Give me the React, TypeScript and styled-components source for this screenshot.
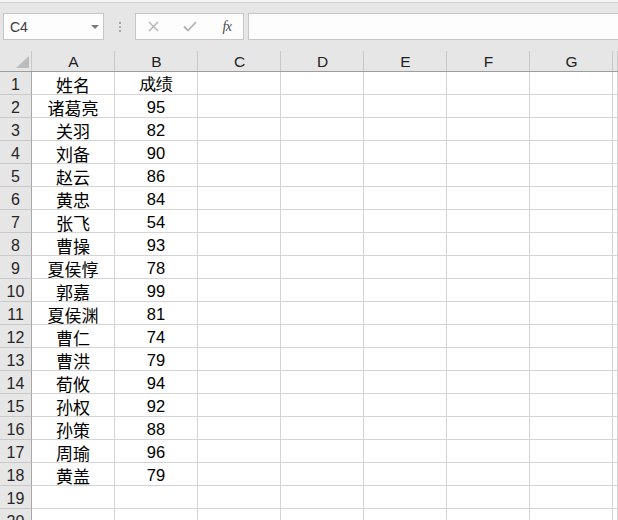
import React from "react";
import styled, { createGlobalStyle } from "styled-components";

const Global = createGlobalStyle`
  html, body { margin: 0; padding: 0; background: #ffffff; overflow: hidden; }
  body { width: 618px; height: 520px; }
`;

const Page = styled.div`
  width: 618px;
  height: 520px;
  overflow: hidden;
  background: #ffffff;
  font-family: "Liberation Sans", Arial, sans-serif;
`;

const FormulaArea = styled.div`
  height: 49px;
  box-sizing: border-box;
  background: #e6e6e6;
  border-top: 2px solid #f3f3f3;
  position: relative;
  display: flex;
  align-items: flex-start;
  padding: 11px 0 0 3px;
  &::before {
    content: "";
    position: absolute;
    left: 0; right: 0; top: 0;
    height: 1px;
    background: #d2d2d2;
  }
`;

const NameBox = styled.div`
  width: 101px;
  height: 27px;
  box-sizing: border-box;
  background: #fdfdfd;
  border: 1px solid #c6c6c6;
  display: flex;
  align-items: center;
  padding: 0 0 0 6px;
  font-size: 14px;
  color: #3a3a3a;
  position: relative;
`;

const DropArrow = styled.span`
  position: absolute;
  right: 4px;
  top: 11px;
  width: 0; height: 0;
  border-left: 4px solid transparent;
  border-right: 4px solid transparent;
  border-top: 4px solid #7a7a7a;
`;

const Grip = styled.div`
  width: 31px;
  height: 27px;
  display: flex;
  flex-direction: column;
  align-items: center;
  justify-content: center;
  gap: 2px;
  span { width: 2px; height: 2px; background: #a8a8a8; display: block; }
`;

const FnBox = styled.div`
  width: 109px;
  height: 27px;
  box-sizing: border-box;
  background: #fdfdfd;
  border: 1px solid #c6c6c6;
  display: flex;
  align-items: center;
  padding-left: 8px;
`;

const IconSlot = styled.div<{ w: number }>`
  width: ${(p) => p.w}px;
  display: flex;
  align-items: center;
  justify-content: center;
`;

const Fx = styled.span`
  font-family: "Liberation Serif", "Times New Roman", serif;
  font-style: italic;
  font-size: 14px;
  color: #4a4a4a;
  letter-spacing: -0.5px;
`;

const FormulaInput = styled.div`
  flex: 1;
  height: 27px;
  box-sizing: border-box;
  margin-left: 4px;
  background: #fdfdfd;
  border: 1px solid #c6c6c6;
  border-right: none;
`;

const Grid = styled.div`
  display: grid;
  grid-template-columns: 32px repeat(7, 83px) 1fr;
  grid-auto-rows: 23px;
`;

const ColHead = styled.div`
  background: #e6e6e6;
  box-sizing: border-box;
  border-bottom: 1px solid #9d9d9d;
  position: relative;
  display: flex;
  align-items: center;
  justify-content: center;
  font-size: 15.5px;
  color: #1f1f1f;
  padding-top: 4px;
  &::after {
    content: "";
    position: absolute;
    right: 0;
    top: 2px;
    bottom: 0;
    width: 1px;
    background: #c9c9c9;
  }
`;

const Corner = styled(ColHead)`
  &::before {
    content: "";
    position: absolute;
    right: 3px;
    bottom: 3px;
    width: 13px;
    height: 12px;
    background: #bcbcbc;
    clip-path: polygon(100% 0, 100% 100%, 0 100%);
  }
`;

const RowHead = styled.div`
  background: #e6e6e6;
  box-sizing: border-box;
  border-right: 1px solid #a8a8a8;
  border-bottom: 1px solid #c9c9c9;
  display: flex;
  align-items: center;
  justify-content: center;
  padding-top: 3px;
  font-size: 16px;
  color: #262626;
`;

const Cell = styled.div<{ cjk?: boolean }>`
  box-sizing: border-box;
  border-right: 1px solid #d4d4d4;
  border-bottom: 1px solid #d4d4d4;
  display: flex;
  align-items: center;
  justify-content: center;
  padding-top: ${(p) => (p.cjk ? "2px" : "3px")};
  color: #000;
  font-size: ${(p) => (p.cjk ? "17px" : "16.5px")};
  font-family: ${(p) =>
    p.cjk
      ? '"Noto Sans CJK SC", "Noto Sans", sans-serif'
      : '"Liberation Sans", Arial, sans-serif'};
  white-space: nowrap;
`;

const data: [string, string][] = [
  ["姓名", "成绩"],
  ["诸葛亮", "95"],
  ["关羽", "82"],
  ["刘备", "90"],
  ["赵云", "86"],
  ["黄忠", "84"],
  ["张飞", "54"],
  ["曹操", "93"],
  ["夏侯惇", "78"],
  ["郭嘉", "99"],
  ["夏侯渊", "81"],
  ["曹仁", "74"],
  ["曹洪", "79"],
  ["荀攸", "94"],
  ["孙权", "92"],
  ["孙策", "88"],
  ["周瑜", "96"],
  ["黄盖", "79"],
  ["", ""],
  ["", ""],
];

const cols = ["A", "B", "C", "D", "E", "F", "G", ""];

export default function App() {
  return (
    <Page>
      <Global />
      <FormulaArea>
        <NameBox>
          C4
          <DropArrow />
        </NameBox>
        <Grip>
          <span />
          <span />
          <span />
        </Grip>
        <FnBox>
          <IconSlot w={18}>
            <svg width="11" height="11" viewBox="0 0 11 11">
              <path d="M1 1 L10 10 M10 1 L1 10" stroke="#b3b3b3" strokeWidth="1.4" fill="none" />
            </svg>
          </IconSlot>
          <IconSlot w={56}>
            <svg width="14" height="11" viewBox="0 0 14 11">
              <path d="M1 5.5 L5 9.5 L13 1" stroke="#b3b3b3" strokeWidth="1.8" fill="none" />
            </svg>
          </IconSlot>
          <IconSlot w={18}>
            <Fx>fx</Fx>
          </IconSlot>
        </FnBox>
        <FormulaInput />
      </FormulaArea>
      <Grid>
        <Corner />
        {cols.map((c, i) => (
          <ColHead key={"h" + i}>{c}</ColHead>
        ))}
        {data.map((row, r) => (
          <React.Fragment key={r}>
            <RowHead>{r + 1}</RowHead>
            <Cell cjk>{row[0]}</Cell>
            <Cell>{row[1]}</Cell>
            {cols.slice(2).map((_, i) => (
              <Cell key={i} />
            ))}
          </React.Fragment>
        ))}
      </Grid>
    </Page>
  );
}
